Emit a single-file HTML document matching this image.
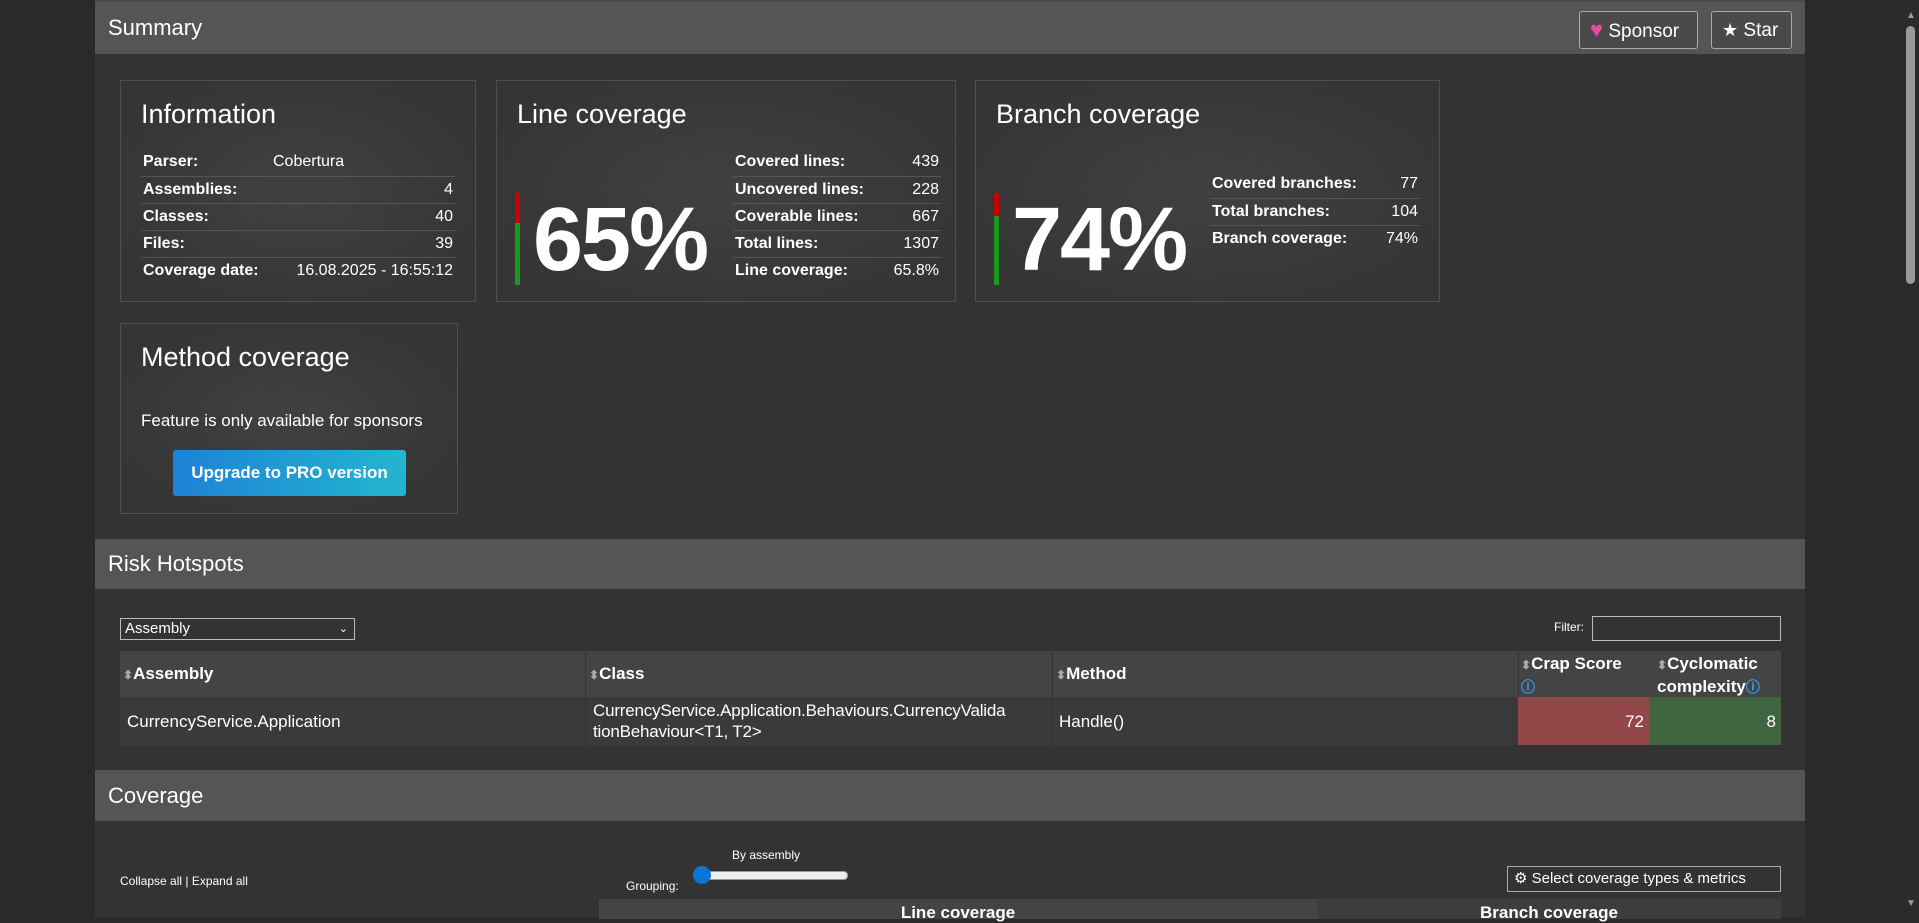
<!DOCTYPE html>
<html><head><meta charset="utf-8"><style>
*{box-sizing:border-box;margin:0;padding:0}
body{width:1919px;height:917px;overflow:hidden;background:#2a2a2a;font-family:"Liberation Sans",Arial,sans-serif;color:#fff;position:relative}
.main{position:absolute;left:95px;top:0;width:1710px;height:917px;background:#333;border-top:2px solid #4a4a4a}
.hdr{position:absolute;left:0;width:1710px;background:#565553;font-size:22px;padding-left:13px}
.card{position:absolute;border:1px solid #4f4f4f;background:radial-gradient(ellipse at center,#414141 0%,#353535 80%)}
.card h2{position:absolute;left:20px;top:18px;font-weight:normal;font-size:27px}
table.kv{position:absolute;border-collapse:collapse;font-size:16px}
table.kv td{padding:2px 2px;height:27px}
table.kv tr+tr td{border-top:1px solid #555}
table.kv td:first-child{font-weight:bold}
table.kv td.r{text-align:right}
.big{position:absolute;font-weight:bold;font-size:90px;letter-spacing:-2px}
.bar{position:absolute;width:5px}
.btn{position:absolute;border:1px solid #aaa;border-radius:3px;height:38px;font-size:19px;line-height:36px;padding-left:10px;background:#4a4a4a}
.abs{position:absolute}
</style></head><body>
<div class="main">
<div class="hdr" style="top:0;height:52px;line-height:52px">Summary</div>
<div class="btn" style="left:1484px;top:9px;width:119px"><span style="color:#e84aa8;font-size:22px">♥</span> Sponsor</div>
<div class="btn" style="left:1616px;top:9px;width:81px"><span style="font-size:18px">★</span> Star</div>

<div class="card" style="left:25px;top:78px;width:356px;height:222px">
<h2>Information</h2>
<table class="kv" style="left:20px;top:68px;width:314px">
<tr><td style="width:130px">Parser:</td><td>Cobertura</td></tr>
<tr><td>Assemblies:</td><td class="r">4</td></tr>
<tr><td>Classes:</td><td class="r">40</td></tr>
<tr><td>Files:</td><td class="r">39</td></tr>
<tr><td style="white-space:nowrap">Coverage date:</td><td class="r" style="white-space:nowrap">16.08.2025 - 16:55:12</td></tr>
</table></div>

<div class="card" style="left:401px;top:78px;width:460px;height:222px">
<h2>Line coverage</h2>
<div class="bar" style="left:18px;top:112px;height:30px;background:#c00"></div>
<div class="bar" style="left:18px;top:142px;height:62px;background:#1a9a1a"></div>
<div class="big" style="left:36px;top:108px">65%</div>
<table class="kv" style="left:236px;top:68px;width:208px">
<tr><td>Covered lines:</td><td class="r">439</td></tr>
<tr><td>Uncovered lines:</td><td class="r">228</td></tr>
<tr><td>Coverable lines:</td><td class="r">667</td></tr>
<tr><td>Total lines:</td><td class="r">1307</td></tr>
<tr><td>Line coverage:</td><td class="r">65.8%</td></tr>
</table></div>

<div class="card" style="left:880px;top:78px;width:465px;height:222px">
<h2>Branch coverage</h2>
<div class="bar" style="left:18px;top:112px;height:23px;background:#c00"></div>
<div class="bar" style="left:18px;top:135px;height:69px;background:#1a9a1a"></div>
<div class="big" style="left:36px;top:108px">74%</div>
<table class="kv" style="left:234px;top:90px;width:210px">
<tr><td>Covered branches:</td><td class="r">77</td></tr>
<tr><td>Total branches:</td><td class="r">104</td></tr>
<tr><td>Branch coverage:</td><td class="r">74%</td></tr>
</table></div>

<div class="card" style="left:25px;top:321px;width:338px;height:191px">
<h2>Method coverage</h2>
<div class="abs" style="left:20px;top:87px;font-size:17px">Feature is only available for sponsors</div>
<div class="abs" style="left:52px;top:126px;width:233px;height:46px;border-radius:3px;background:linear-gradient(90deg,#1e82d6,#22b6cf);font-weight:bold;font-size:17px;line-height:46px;text-align:center">Upgrade to PRO version</div>
</div>

<div class="hdr" style="top:537px;height:50px;line-height:50px">Risk Hotspots</div>
<div class="abs" style="left:25px;top:616px;width:235px;height:22px;border:1px solid #bbb;font-size:15px;line-height:20px;padding-left:4px">Assembly<span style="position:absolute;right:6px;font-size:11px">⌄</span></div>
<div class="abs" style="left:1459px;top:618px;font-size:12px">Filter:</div>
<div class="abs" style="left:1497px;top:614px;width:189px;height:25px;border:1px solid #bbb;background:#333"></div>

<div class="abs" style="left:25px;top:649px;width:1661px;height:46px;background:#444"></div>
<div class="abs" style="left:25px;top:695px;width:1661px;height:48px;background:#3a3a3a"></div>
<div class="abs" style="left:1423px;top:695px;width:131px;height:48px;background:#924848"></div>
<div class="abs" style="left:1554px;top:695px;width:132px;height:48px;background:#3f6640"></div>
<div class="abs" style="left:490px;top:649px;width:1px;height:94px;background:#333"></div>
<div class="abs" style="left:957px;top:649px;width:1px;height:94px;background:#333"></div>
<div class="abs" style="left:1423px;top:649px;width:1px;height:46px;background:#333"></div>
<div class="abs" style="left:28px;top:662px;font-size:17px;font-weight:bold"><span style="color:#aaa;font-size:12px">⬍</span>Assembly</div>
<div class="abs" style="left:494px;top:662px;font-size:17px;font-weight:bold"><span style="color:#aaa;font-size:12px">⬍</span>Class</div>
<div class="abs" style="left:961px;top:662px;font-size:17px;font-weight:bold"><span style="color:#aaa;font-size:12px">⬍</span>Method</div>
<div class="abs" style="left:1426px;top:651px;font-size:17px;font-weight:bold;line-height:21px"><span style="color:#aaa;font-size:12px">⬍</span>Crap Score<br><span style="color:#3aa0ff;font-size:14px">ⓘ</span></div>
<div class="abs" style="left:1562px;top:651px;font-size:17px;font-weight:bold;line-height:21px"><span style="color:#aaa;font-size:12px">⬍</span>Cyclomatic<br>complexity<span style="color:#3aa0ff;font-size:14px">ⓘ</span></div>
<div class="abs" style="left:32px;top:710px;font-size:17px">CurrencyService.Application</div>
<div class="abs" style="left:498px;top:698px;font-size:17px;line-height:21px;letter-spacing:-0.2px">CurrencyService.Application.Behaviours.CurrencyValida<br>tionBehaviour&lt;T1, T2&gt;</div>
<div class="abs" style="left:964px;top:710px;font-size:17px">Handle()</div>
<div class="abs" style="left:1423px;top:710px;width:126px;text-align:right;font-size:17px">72</div>
<div class="abs" style="left:1554px;top:710px;width:127px;text-align:right;font-size:17px">8</div>

<div class="hdr" style="top:768px;height:51px;line-height:51px">Coverage</div>
<div class="abs" style="left:25px;top:872px;font-size:12px">Collapse all | Expand all</div>
<div class="abs" style="left:637px;top:846px;font-size:12px">By assembly</div>
<div class="abs" style="left:531px;top:877px;font-size:12px">Grouping:</div>
<div class="abs" style="left:599px;top:869px;width:154px;height:9px;border-radius:4px;background:#eee;border:1px solid #999"></div>
<div class="abs" style="left:598px;top:864px;width:18px;height:18px;border-radius:50%;background:#0a75d8"></div>
<div class="abs" style="left:1412px;top:864px;width:274px;height:26px;border:1px solid #aaa;font-size:15px;line-height:24px;padding-left:6px">⚙ Select coverage types &amp; metrics</div>
<div class="abs" style="left:504px;top:897px;width:718px;height:20px;background:#444;font-size:17px;font-weight:bold;text-align:center;padding-top:4px">Line coverage</div>
<div class="abs" style="left:1222px;top:897px;width:464px;height:20px;background:#3d3d3d;font-size:17px;font-weight:bold;text-align:center;padding-top:4px">Branch coverage</div>
</div>
<div class="abs" style="left:1900px;top:0;width:19px;height:917px;background:#2b2b2b"></div>
<div class="abs" style="left:1906px;top:26px;width:9px;height:258px;border-radius:5px;background:#9a9a9a"></div>
<div class="abs" style="left:1906px;top:10px;font-size:10px;color:#9a9a9a">▲</div>
<div class="abs" style="left:1906px;top:898px;font-size:10px;color:#9a9a9a">▼</div>
</body></html>
